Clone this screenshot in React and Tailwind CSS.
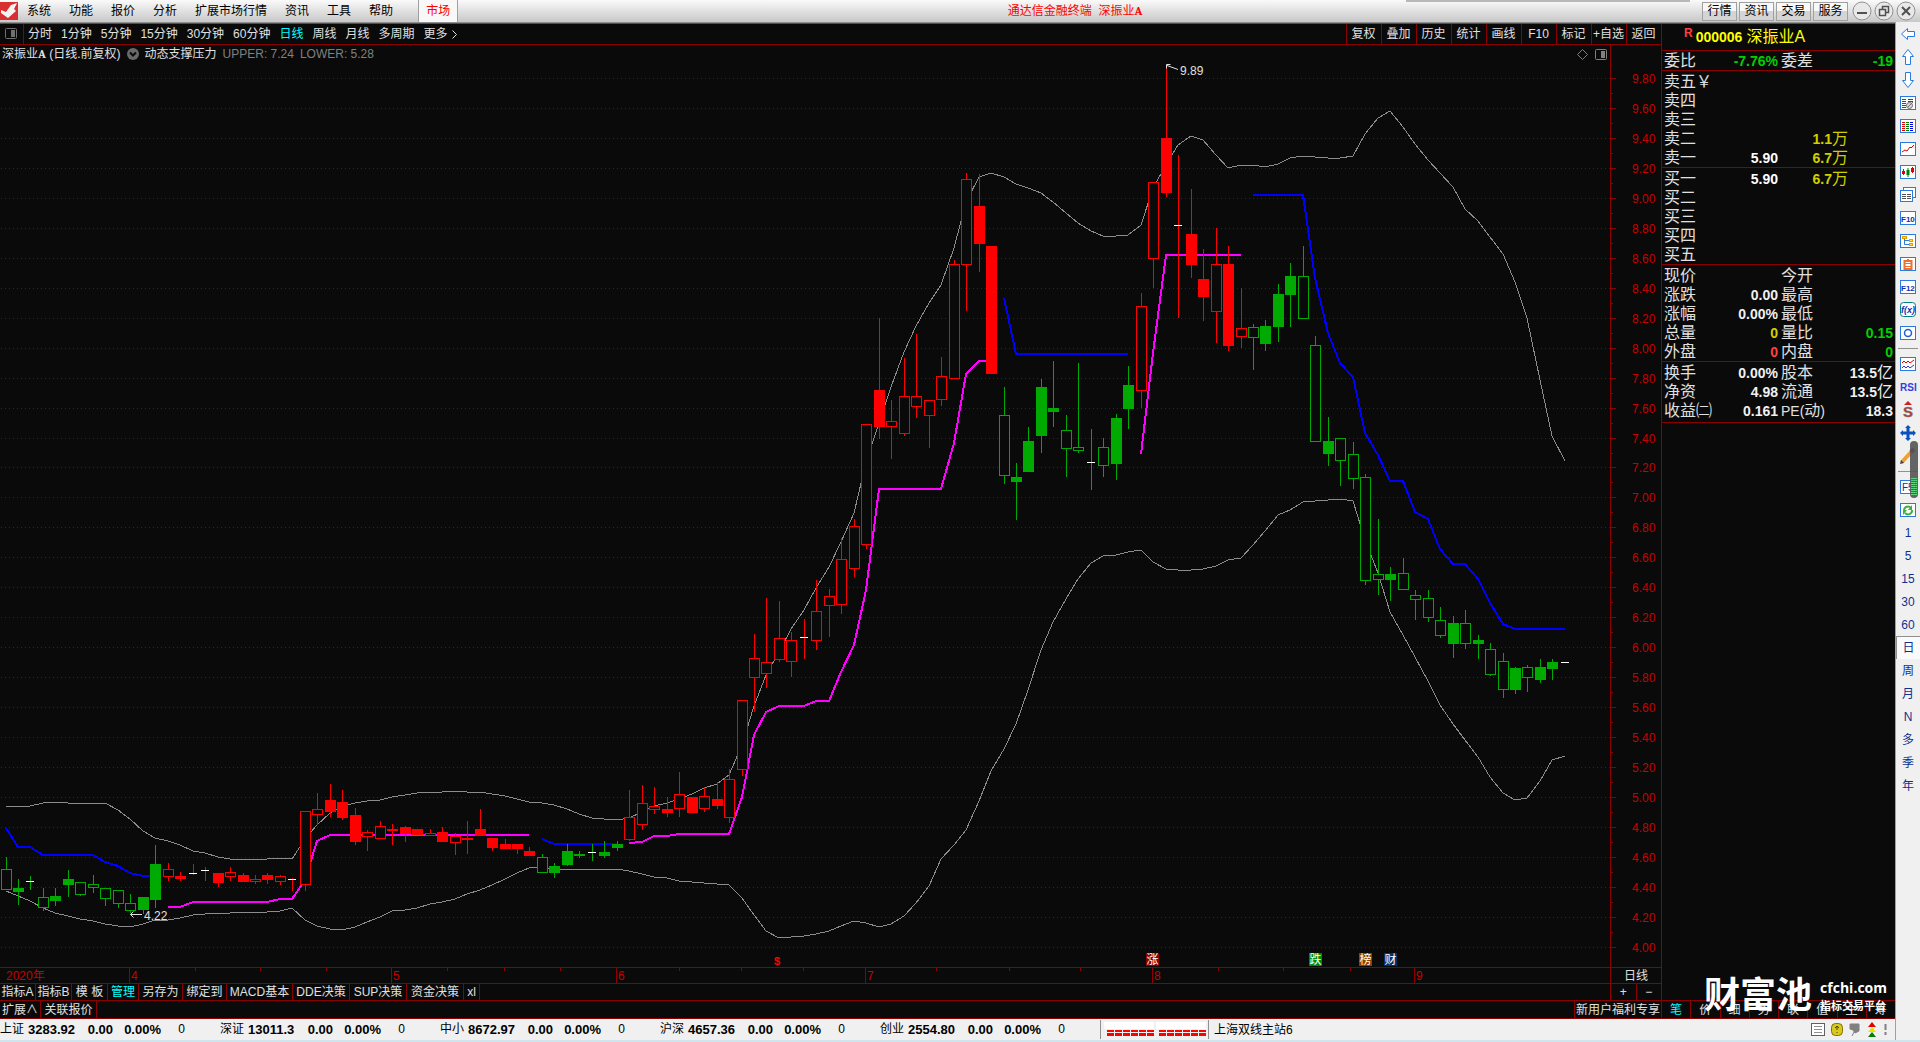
import { memo, useState } from 'react';
import clsx from 'clsx';

const MENUS = ['系统', '功能', '报价', '分析', '扩展市场行情', '资讯', '工具', '帮助'];
const HEADER_BUTTONS = ['行情', '资讯', '交易', '服务'];
const PERIODS = ['分时', '1分钟', '5分钟', '15分钟', '30分钟', '60分钟', '日线', '周线', '月线', '多周期'];
const CHART_ACTIONS = ['复权', '叠加', '历史', '统计', '画线', 'F10', '标记', '+自选', '返回'];

const INDICATOR_TABS = [
  { label: '指标A', width: 'w-[36px]' },
  { label: '指标B', width: 'w-[36px]' },
  { label: '模 板', width: 'w-[36px]' },
  { label: '管理', width: 'w-[31px]', active: true },
  { label: '另存为', width: 'w-[44px]' },
  { label: '绑定到', width: 'w-[44px]' },
  { label: 'MACD基本', width: 'w-[66px]' },
  { label: 'DDE决策', width: 'w-[57px]' },
  { label: 'SUP决策', width: 'w-[57px]' },
  { label: '资金决策', width: 'w-[57px]' },
  { label: 'xl', width: 'w-[16px]' },
];

const PANEL_TABS = ['笔', '价', '细', '势', '联', '值', '主', '筹'];

const INDEXES = [
  { name: '上证', value: '3283.92' },
  { name: '深证', value: '13011.3' },
  { name: '中小', value: '8672.97' },
  { name: '沪深', value: '4657.36' },
  { name: '创业', value: '2554.80' },
];

const SELLS = [
  { label: '卖五￥' }, { label: '卖四' }, { label: '卖三' },
  { label: '卖二', volume: '1.1' },
  { label: '卖一', price: '5.90', volume: '6.7' },
];
const BUYS = [
  { label: '买一', price: '5.90', volume: '6.7' },
  { label: '买二' }, { label: '买三' }, { label: '买四' }, { label: '买五' },
];

const WHITE = 'text-[#f0f0f0]';
const GREEN = 'text-[#00d000]';

const QUOTES = [
  ['现价', '', WHITE, '今开', '', WHITE],
  ['涨跌', '0.00', WHITE, '最高', '', WHITE],
  ['涨幅', '0.00%', WHITE, '最低', '', WHITE],
  ['总量', '0', 'text-[#d0d000]', '量比', '0.15', GREEN],
  ['外盘', '0', 'text-[#ff4040]', '内盘', '0', GREEN],
];
const FUNDAMENTALS = [
  ['换手', '0.00%', WHITE, '股本', '13.5亿', WHITE],
  ['净资', '4.98', WHITE, '流通', '13.5亿', WHITE],
  ['收益㈡', '0.161', WHITE, 'PE(动)', '18.3', WHITE],
];

// R/G hollow body, r/g solid body, x/y doji with a red/green wick
// [kind, high, body top, body bottom, low]
const CANDLES = [
  ['G', 857, 869, 889, 890], ['g', 879, 888, 892, 905], ['y', 876, 881, 881, 890], ['G', 888, 897, 907, 911],
  ['g', 888, 896, 901, 906], ['g', 870, 879, 885, 897], ['G', 882, 882, 894, 896], ['G', 875, 884, 887, 893],
  ['G', 888, 888, 898, 906], ['G', 890, 890, 903, 908], ['G', 894, 903, 910, 913], ['g', 897, 897, 910, 914],
  ['g', 845, 864, 900, 908], ['R', 863, 869, 876, 881], ['r', 872, 876, 879, 881], ['x', 864, 873, 873, 875],
  ['x', 867, 870, 870, 881], ['r', 873, 873, 883, 887], ['R', 867, 872, 876, 881], ['r', 873, 875, 882, 882],
  ['R', 875, 879, 881, 884], ['r', 873, 875, 880, 884], ['R', 875, 876, 881, 885], ['x', 878, 879, 879, 891],
  ['R', 811, 811, 884, 891], ['R', 793, 809, 814, 825], ['r', 784, 800, 812, 817], ['r', 790, 802, 818, 820],
  ['r', 808, 815, 842, 845], ['R', 830, 832, 836, 851], ['R', 821, 826, 838, 839], ['r', 824, 829, 831, 845],
  ['r', 826, 827, 834, 842], ['r', 829, 829, 835, 835], ['R', 829, 833, 835, 836], ['r', 827, 832, 842, 842],
  ['R', 833, 836, 842, 855], ['r', 821, 838, 840, 854], ['r', 809, 829, 836, 836], ['r', 838, 838, 848, 851],
  ['r', 839, 844, 849, 849], ['r', 844, 844, 849, 854], ['r', 847, 851, 856, 856], ['G', 854, 857, 872, 873],
  ['g', 863, 866, 873, 878], ['g', 844, 851, 865, 866], ['g', 851, 854, 856, 858], ['y', 844, 852, 852, 861],
  ['g', 841, 852, 856, 858], ['g', 841, 844, 848, 851], ['R', 790, 817, 839, 841], ['R', 785, 803, 824, 830],
  ['R', 787, 806, 809, 814], ['r', 797, 809, 813, 817], ['R', 772, 794, 808, 817], ['r', 797, 797, 813, 813],
  ['R', 787, 796, 808, 812], ['r', 782, 799, 806, 809], ['R', 769, 779, 817, 823], ['R', 700, 700, 769, 776],
  ['R', 634, 658, 677, 712], ['R', 598, 662, 673, 688], ['R', 601, 638, 659, 662], ['R', 632, 640, 661, 677],
  ['x', 619, 637, 637, 659], ['R', 580, 611, 640, 650], ['R', 589, 596, 605, 637], ['R', 538, 559, 604, 614],
  ['R', 519, 526, 568, 577], ['R', 424, 424, 544, 549], ['r', 318, 390, 427, 439], ['R', 400, 421, 426, 459],
  ['R', 358, 396, 433, 436], ['R', 334, 396, 406, 418], ['R', 400, 400, 415, 448], ['R', 357, 376, 399, 406],
  ['R', 260, 264, 378, 378], ['R', 173, 179, 264, 311], ['r', 174, 206, 244, 272], ['r', 246, 246, 374, 374],
  ['G', 387, 415, 475, 484], ['g', 463, 477, 482, 520], ['g', 427, 441, 472, 472], ['g', 379, 387, 436, 453],
  ['g', 361, 408, 412, 427], ['G', 415, 430, 448, 477], ['G', 363, 447, 450, 453], ['y', 429, 462, 462, 490],
  ['G', 438, 447, 465, 477], ['g', 414, 418, 464, 480], ['g', 366, 385, 409, 429], ['R', 293, 306, 390, 408],
  ['R', 182, 182, 258, 288], ['r', 66, 138, 193, 197], ['x', 155, 225, 225, 318], ['r', 189, 234, 265, 278],
  ['r', 249, 279, 297, 321], ['R', 228, 264, 311, 343], ['r', 246, 264, 346, 351], ['R', 288, 328, 336, 348],
  ['G', 324, 327, 337, 370], ['g', 320, 326, 344, 351], ['g', 284, 294, 327, 342], ['g', 263, 276, 295, 327],
  ['G', 246, 276, 318, 318], ['G', 336, 345, 441, 441], ['g', 417, 441, 454, 466], ['G', 438, 438, 460, 486],
  ['G', 442, 454, 478, 489], ['G', 474, 477, 580, 585], ['G', 519, 574, 579, 595], ['g', 567, 574, 580, 601],
  ['G', 558, 573, 589, 589], ['G', 590, 595, 599, 620], ['G', 590, 598, 617, 622], ['G', 607, 620, 635, 638],
  ['g', 616, 623, 644, 658], ['G', 610, 623, 643, 649], ['g', 635, 640, 644, 659], ['G', 643, 649, 674, 676],
  ['G', 653, 661, 689, 698], ['g', 667, 668, 690, 694], ['G', 665, 667, 677, 692], ['g', 659, 667, 680, 683],
  ['g', 659, 662, 669, 680], ['x', 662, 662, 662, 662],
];

const UPPER = [
  807, 806, 806, 803, 802, 803, 803, 803, 803, 810, 819, 831, 838, 841, 845, 851, 853, 857, 859, 860,
  859, 859, 858, 859, 839, 825, 813, 806, 803, 801, 800, 797, 795, 793, 792, 792, 791, 792, 792, 794,
  796, 799, 802, 803, 805, 809, 814, 818, 819, 820, 818, 812, 806, 803, 799, 794, 788, 784, 775, 745,
  706, 675, 652, 629, 610, 588, 567, 542, 513, 462, 423, 387, 352, 326, 303, 285, 248, 202, 177, 173,
  177, 184, 188, 193, 202, 213, 223, 231, 236, 236, 235, 225, 188, 165, 145, 136, 140, 155, 168, 165,
  165, 167, 164, 158, 156, 157, 158, 158, 156, 134, 118, 111, 127, 144, 160, 173, 187, 209, 221, 237,
  254, 282, 318, 380, 436, 461,
];

const LOWER = [
  891, 896, 901, 908, 913, 916, 919, 921, 924, 926, 927, 924, 920, 920, 918, 915, 914, 913, 913, 912,
  912, 912, 911, 908, 920, 926, 929, 930, 927, 922, 917, 911, 910, 908, 904, 902, 899, 894, 890, 885,
  879, 873, 868, 867, 869, 869, 869, 869, 869, 869, 871, 874, 877, 878, 881, 882, 883, 884, 885, 898,
  915, 931, 938, 937, 936, 934, 931, 926, 921, 923, 927, 924, 916, 903, 886, 859, 845, 830, 801, 771,
  749, 724, 690, 650, 622, 599, 579, 563, 556, 555, 552, 550, 562, 569, 570, 570, 569, 566, 560, 558,
  545, 531, 515, 510, 502, 501, 500, 499, 501, 540, 573, 612, 635, 657, 681, 705, 724, 740, 757, 777,
  793, 800, 798, 781, 760, 756,
];

// Support and resistance pieces: start bar, then one level per bar
const SUPPORTS = [
  { start: 13, ys: [907, 907, 902, 902, 902, 902, 902, 902, 902, 899, 899, 880, 841, 835, 835, 835, 835, 835, 835, 835, 835, 835, 835, 835, 835, 835, 835, 835, 835, 835] },
  { start: 50, ys: [843, 842, 836, 836, 834, 834, 834, 834, 834, 797, 735, 712, 706, 706, 706, 701, 701, 672, 645, 590, 489, 489, 489, 489, 489, 489, 443, 374, 361, 361] },
  { start: 91, ys: [454, 353, 255, 255, 255, 255, 255, 255, 255] },
];
const RESISTANCES = [
  { start: 0, ys: [828, 847, 847, 855, 855, 855, 855, 855, 862, 866, 873, 876, 876] },
  { start: 43, ys: [839, 844, 844, 844, 844, 844, 844] },
  { start: 80, ys: [298, 354, 354, 354, 354, 354, 354, 354, 354, 354, 354] },
  { start: 100, ys: [195, 195, 195, 195, 195, 278, 333, 363, 377, 433, 455, 481, 481, 512, 519, 549, 564, 564, 579, 603, 624, 629, 629, 629, 629, 629] },
];

const EVENTS = [
  { x: 1146, label: '涨', fill: '#8b0000' },
  { x: 1309, label: '跌', fill: '#008a00' },
  { x: 1359, label: '榜', fill: '#8a4000' },
  { x: 1384, label: '财', fill: '#003070' },
];

const MONTHS = [[129, '4'], [391, '5'], [616, '6'], [865, '7'], [1152, '8'], [1414, '9']];
const WEEKS = [195, 260, 326, 447, 504, 560, 679, 741, 803, 936, 1009, 1080, 1218, 1283, 1350];

const barX = i => Math.round(5.5 + i * 12.475);
const priceY = p => Math.round(78 + (9.8 - p) * 149.8);
const toPoints = (ys, start = 0) => ys.map((y, i) => `${barX(start + i)},${y}`).join(' ');
const PRICES = [...Array(30)].map((_, i) => 9.8 - i * 0.2);

const Candle = memo(({ index, candle }) => {
  const [kind, high, top, bottom, low] = candle;
  const x = barX(index);
  const color = 'Rrx'.includes(kind) ? '#ff0000' : '#00aa00';
  const doji = kind === 'x' || kind === 'y';
  const hollow = kind === 'R' || kind === 'G';
  return (
    <g>
      {low > high && <rect x={x} y={high} width="1" height={low - high} fill={color} />}
      {doji && <rect x={x - 4} y={top} width="8" height="1" fill="#ffffff" />}
      {hollow && <rect x={x - 4.5} y={top + 0.5} width="10" height={Math.max(bottom - top, 1)} fill="#0a0a0a" stroke={color} />}
      {!doji && !hollow && <rect x={x - 5} y={top} width="11" height={bottom - top} fill={color} />}
    </g>
  );
});

function Chart() {
  return (
    <div className="relative flex h-[922px]">
      <svg className="block h-full min-w-0 flex-1" fontSize="12">
        {/* bar levels are measured from the top of the window, the plot starts under the 45px of bars */}
        <g transform="translate(0 -45)">
          <g shapeRendering="crispEdges">
            {PRICES.map(p => (
              <line key={p} x1="1" x2="100%" y1={priceY(p) + 0.5} y2={priceY(p) + 0.5} stroke="#8b0000" strokeDasharray="1 3" />
            ))}
            <g fill="none" stroke="#8c8c8c">
              <polyline points={toPoints(UPPER)} />
              <polyline points={toPoints(LOWER)} />
            </g>
            <g fill="none" strokeWidth="2" stroke="#ff00ff">
              {SUPPORTS.map(s => <polyline key={s.start} points={toPoints(s.ys, s.start)} />)}
            </g>
            <g fill="none" strokeWidth="2" stroke="#0000ff">
              {RESISTANCES.map(s => <polyline key={s.start} points={toPoints(s.ys, s.start)} />)}
            </g>
            {CANDLES.map((c, i) => <Candle key={i} index={i} candle={c} />)}
          </g>

          <g stroke="#e0e0e0" fill="none">
            <path d="M142 914.5H130.500M133.500 911.500L130.500 914.500L133.500 917.500" />
            <path d="M1178 69.500L1167 65.500M1170.500 64.500H1166.500V68.500" />
          </g>
          <g fill="#e0e0e0">
            <text x="144" y="920">4.22</text>
            <text x="1180" y="75">9.89</text>
          </g>

          <text x="774" y="965" fontSize="11" fontWeight="bold" fill="#ff0000">$</text>
          {EVENTS.map(e => (
            <g key={e.label}>
              <rect x={e.x} y="953" width="13" height="13" fill={e.fill} />
              <text x={e.x + 0.5} y="964" fill="#ffffff">{e.label}</text>
            </g>
          ))}
        </g>
      </svg>

      <svg className="block h-full w-[51px] shrink-0" fontSize="12">
        <g transform="translate(0 -45)" shapeRendering="crispEdges" fill="#8b0000">
          <rect x="0" y="45" width="1" height="922" />
          {PRICES.map((p, i) => (
            <g key={p}>
              <rect x="0" y={priceY(p)} width="6" height="1" />
              {i < 29 && <rect x="0" y={priceY(p - 0.1)} width="3" height="1" />}
              <text x="22" y={priceY(p) + 5} fill="#c80000">{p.toFixed(2)}</text>
            </g>
          ))}
        </g>
      </svg>

      {/* Indicator legend over the plot */}
      <div className="absolute top-0 left-0 flex h-[18px] w-full items-center pl-[2px] text-[#e0e0e0]">
        <span>深振业<b className="font-serif">A</b> (日线.前复权)</span>
        <svg className="mx-[6px] h-3 w-3" viewBox="0 0 12 12">
          <circle cx="6" cy="6" r="6" fill="#6a6a6a" />
          <path d="M3 4.500L6 7.500L9 4.500" fill="none" stroke="#0a0a0a" strokeWidth="2" />
        </svg>
        <span>动态支撑压力</span>
        <span className="ml-[6px] text-[#808080]">UPPER: 7.24</span>
        <span className="ml-[6px] text-[#808080]">LOWER: 5.28</span>
        <svg className="mr-[54px] ml-auto h-3 w-[34px]" fill="none" stroke="#808080">
          <path d="M9.500 1.500L14.500 6.500L9.500 11.500L4.500 6.500Z" />
          <rect x="22.500" y="1.500" width="11" height="10" rx="1" />
          <rect x="28" y="3" width="4" height="7" fill="#808080" stroke="none" />
        </svg>
      </div>
    </div>
  );
}

function DateAxis() {
  return (
    <div className="flex h-4 border-t border-[#8b0000]">
      <svg className="block h-full min-w-0 flex-1" fontSize="12" fill="#c80000" shapeRendering="crispEdges">
        <text x="6" y="12">2020年</text>
        {MONTHS.map(([x, label]) => (
          <g key={label}>
            <rect x={x} y="0" width="1" height="16" fill="#8b0000" />
            <text x={x + 2} y="12">{label}</text>
          </g>
        ))}
        {WEEKS.map(x => <rect key={x} x={x} y="0" width="1" height="3" fill="#8b0000" />)}
      </svg>
      <div className="flex w-[51px] items-center justify-center border-l border-[#8b0000]">日线</div>
    </div>
  );
}

const DepthTable = ({ rows }) => (
  <div className="border-b border-[#8b0000] pt-px">
    <table className="w-full table-fixed text-base">
      <colgroup>
        <col className="w-[54px]" /><col className="w-[62px]" /><col className="w-[70px]" /><col />
      </colgroup>
      <tbody>
        {rows.map(r => (
          <tr key={r.label} className="h-[19px]">
            <th scope="row" className="p-0 pl-[2px] text-left font-normal leading-[18px] whitespace-nowrap">{r.label}</th>
            <td className="p-0 text-right text-sm font-bold leading-[18px] text-white">{r.price}</td>
            <td className="p-0 text-right leading-[18px] text-[#d0d000]">
              {r.volume && <><b className="text-sm leading-4">{r.volume}</b>万</>}
            </td>
            <td className="p-0" />
          </tr>
        ))}
      </tbody>
    </table>
  </div>
);

const QuoteTable = ({ rows, className }) => (
  <div className={className}>
    <table className="w-full table-fixed text-base">
      <colgroup>
        <col className="w-[54px]" /><col className="w-[62px]" /><col className="w-[58px]" /><col />
      </colgroup>
      <tbody>
        {rows.map(([a, av, aColor, b, bv, bColor]) => (
          <tr key={a} className="h-[19px]">
            <th scope="row" className="p-0 pl-[2px] text-left font-normal leading-[18px] whitespace-nowrap">{a}</th>
            <td className={clsx('p-0 text-right text-sm font-bold leading-[18px]', aColor)}>{av}</td>
            <th scope="row" className="p-0 pl-[3px] text-left font-normal leading-[18px] whitespace-nowrap">
              {b.startsWith('PE')
                ? <><span className="text-sm leading-4">PE(</span>动<span className="text-sm leading-4">)</span></>
                : b}
            </th>
            <td className={clsx('p-0 pr-[2px] text-right text-sm font-bold leading-[18px] whitespace-nowrap', bColor)}>
              {bv.replace('亿', '')}
              {bv.endsWith('亿') && <span className="text-base leading-4 font-normal">亿</span>}
            </td>
          </tr>
        ))}
      </tbody>
    </table>
  </div>
);

function QuotePanel() {
  return (
    <aside className="w-[234px] shrink-0 overflow-hidden border-l border-[#8b0000] text-[#e0e0e0]">
      <h2 className="flex h-[27px] items-center border-b border-[#8b0000] pl-[22px] text-base text-[#ffff00]">
        <span className="mb-2 text-xs font-bold text-[#ff4040]">R</span>
        <b className="ml-[3px] text-sm">000006</b>
        <span className="ml-1">深振业A</span>
      </h2>
      <QuoteTable rows={[['委比', '-7.76%', GREEN, '委差', '-19', GREEN]]} className="border-b border-[#8b0000]" />
      <DepthTable rows={SELLS} />
      <DepthTable rows={BUYS} />
      <QuoteTable rows={QUOTES} className="border-b border-[#8b0000] pt-px" />
      <QuoteTable rows={FUNDAMENTALS} className="border-b border-[#8b0000] pt-px pb-[2px]" />
    </aside>
  );
}

const Frame = ({ stroke = '#2a7ae0', children }) => (
  <>
    <rect x="1.500" y="2.500" width="15" height="13" fill="#ffffff" stroke={stroke} />
    {children}
  </>
);

const rowsOf = (x, w, color, ys = [5, 7, 9, 11, 13]) =>
  ys.map(y => <rect key={`${x}-${y}`} x={x} y={y} width={w} height="1" fill={color} />);

const TOOL_ICONS = [
  ['后退', <path d="M2.500 9L8.500 3.500V6.500H15.500V11.500H8.500V14.500Z" fill="#ffffff" stroke="#2a7ae0" />],
  ['上翻', <path d="M9 1.500L14.500 8.500H11.500V16.500H6.500V8.500H3.500Z" fill="#ffffff" stroke="#2a7ae0" />],
  ['下翻', <path d="M9 16.500L14.500 9.500H11.500V1.500H6.500V9.500H3.500Z" fill="#ffffff" stroke="#2a7ae0" />],
  ['定制版面', <Frame>{rowsOf(3, 4, '#008000')}{rowsOf(9, 5, '#e00000', [5, 7])}<circle cx="10.500" cy="11.500" r="3" fill="#d8d8d8" stroke="#707070" /><path d="M9 13L14 8" stroke="#707070" /></Frame>],
  ['行情报价', <Frame>{rowsOf(3, 3, '#e00000')}{rowsOf(7, 3, '#008000')}{rowsOf(11, 3, '#0000e0')}</Frame>],
  ['分时图', <Frame><path d="M3 12L6 10L8 11L11 7L12 8L15 5" fill="none" stroke="#e00000" /></Frame>],
  ['K线图', <Frame><path d="M4.500 6V12M13.500 4V10" stroke="#e00000" /><path d="M9 5V14" stroke="#008000" /><rect x="3" y="8" width="3" height="3" fill="#e00000" /><rect x="7.500" y="7" width="3" height="5" fill="#008000" /><rect x="12" y="5" width="3" height="4" fill="#e00000" /></Frame>],
  ['多股同列', <><rect x="4.500" y="1.500" width="12" height="10" fill="#ffffff" stroke="#2a7ae0" /><rect x="1.500" y="4.500" width="12" height="11" fill="#ffffff" stroke="#2a7ae0" />{rowsOf(3, 4, '#505050', [8, 10, 12])}{rowsOf(8, 4, '#505050', [8, 10, 12])}</>],
  ['F10资料', <Frame><text x="2" y="12.500" fontSize="8" fontWeight="bold" fill="#1030b0">F10</text></Frame>],
  ['板块树', <Frame><path d="M5.500 6V12.500H10M5.500 8.500H10" fill="none" stroke="#2a7ae0" /><rect x="3.500" y="4.500" width="4" height="2" fill="#ffe040" stroke="#e0a000" /><rect x="10.500" y="7.500" width="3" height="2" fill="#ffe040" stroke="#e0a000" /><rect x="10.500" y="11.500" width="3" height="2" fill="#ffe040" stroke="#e0a000" /></Frame>],
  ['自选股', <Frame><path d="M5.500 6H12.500V14H5.500ZM9 4V6" fill="none" stroke="#f07030" strokeWidth="2" /><path d="M6 8.500H12M6 11.500H12" stroke="#f07030" /></Frame>],
  ['F12交易', <Frame><text x="2" y="12.500" fontSize="8" fontWeight="bold" fill="#1030b0">F12</text></Frame>],
  ['公式', <><rect x="1.500" y="1.500" width="15" height="14" rx="3" fill="#ffffff" stroke="#008080" /><text x="2" y="12" fontSize="9" fontStyle="italic" fontWeight="bold" fill="#1030b0">f(x)</text></>],
  ['选股', <Frame><circle cx="9" cy="9" r="3.500" fill="none" stroke="#2060d0" strokeWidth="1.500" /></Frame>],
  null,
  ['指标叠加', <Frame><path d="M3 8L5 6L7 8L9 6L11 8L15 5" fill="none" stroke="#e00000" /><path d="M3 13L5 11L7 13L9 11L11 13L15 10" fill="none" stroke="#3030d0" /></Frame>],
  ['RSI指标', <text x="1" y="13" fontSize="10" fontWeight="bold" fill="#3040e0">RSI</text>],
  ['资金', <><path d="M9 0L13 4H5Z" fill="#d02020" /><text x="4" y="16" fontSize="15" fontWeight="bold" fill="#c03030" stroke="#808080" strokeWidth="0.500">S</text></>],
  ['移动', <path d="M9 1L12 4H10.500V7.500H14V6L17 9L14 12V10.500H10.500V14H12L9 17L6 14H7.500V10.500H4V12L1 9L4 6V7.500H7.500V4H6Z" fill="#0a50c0" />],
  ['画线工具', <><path d="M3 15L13 4" stroke="#f0a030" strokeWidth="4" /><path d="M12 5L15 2" stroke="#703030" strokeWidth="4" /><path d="M1 17L2 13L5 16Z" fill="#404040" /></>],
  null,
  ['F5切换', <Frame><text x="3" y="13" fontSize="10" fill="#1030b0">F5</text></Frame>],
  ['刷新', <Frame><path d="M5 9A4 4 0 0 1 12 7M13 9A4 4 0 0 1 6 12" fill="none" stroke="#40b040" strokeWidth="2" /><path d="M13 4V9H9ZM4 14V9H8Z" fill="#40b040" /></Frame>],
];

const TOOL_PERIODS = ['1', '5', '15', '30', '60', '日', '周', '月', 'N', '多', '季', '年'];

function ToolStrip() {
  return (
    <nav className="relative -mt-px flex w-[25px] shrink-0 flex-col border-l border-[#a0a0a0] bg-[#f0f0f0] text-[#103090]">
      {TOOL_ICONS.map((tool, i) => (tool ? (
        <button key={tool[0]} aria-label={tool[0]} className="flex h-[23px] items-center justify-center">
          <svg className="h-[18px] w-[18px]" viewBox="0 0 18 18">{tool[1]}</svg>
        </button>
      ) : (
        <div key={i} className="flex h-2 items-center px-[2px]"><div className="h-px w-full bg-[#909090]" /></div>
      )))}
      {TOOL_PERIODS.map(p => (
        <button
          key={p}
          className={clsx(
            'flex h-[23px] items-center justify-center',
            p === '日' && 'border-t border-l border-[#909090] bg-[#fafafa]'
          )}
        >
          {p}
        </button>
      ))}
      {/* Volume gauge floating over the strip */}
      <div className="absolute top-[419px] right-[2px] flex h-[57px] w-2 flex-col justify-end gap-px rounded-full bg-[#555555] px-px pb-[3px] opacity-90">
        {[...Array(9)].map((_, i) => <div key={i} className="h-px bg-[#50d070]" />)}
      </div>
    </nav>
  );
}

function TitleBar() {
  return (
    <header className="relative flex h-[23px] items-center border-b border-[#909090] bg-linear-to-b from-[#fafafa] to-[#c8c8c8] text-black">
      <svg className="h-[18px] w-[18px]" viewBox="0 0 18 18">
        <rect width="18" height="18" fill="#d83030" />
        <path d="M1 8L6 10L11 3L17 1L14 7L16 9L8 16L1 11Z" fill="#f4f4f4" />
      </svg>
      <nav className="flex">
        {MENUS.map(m => <button key={m} className="px-[9px]">{m}</button>)}
      </nav>
      <button className="ml-4 h-full border-x border-[#a0a0a0] bg-[#f8f8f8] px-[7px] text-[#ff0000]">市场</button>
      <h1 className="min-w-0 flex-1 pr-[10px] text-center text-[#ff0000]">通达信金融终端&nbsp; 深振业<b className="font-serif">A</b></h1>
      <div className="flex gap-[2px]">
        {HEADER_BUTTONS.map(b => (
          <button key={b} className="h-[19px] w-[35px] border border-[#a0a0a0] bg-linear-to-b from-[#f8f8f8] from-50% to-[#d4d4d4] to-50%">{b}</button>
        ))}
      </div>
      <div className="mx-1 flex gap-[2px]">
        {[
          ['最小化', <path d="M5 12H15" />],
          ['还原', <path d="M8.500 8V5.500H14.500V11.500H12M5.500 8.500H11.500V14.500H5.500Z" strokeWidth="1.500" />],
          ['关闭', <path d="M6 6L14 14M14 6L6 14" />],
        ].map(([label, shape]) => (
          <button key={label} aria-label={label}>
            <svg className="h-5 w-5" viewBox="0 0 20 20" fill="none" stroke="#505050" strokeWidth="2">
              <circle cx="10" cy="10" r="9" fill="#e8e8e8" stroke="#909090" strokeWidth="1" />
              {shape}
            </svg>
          </button>
        ))}
      </div>
      <div className="absolute top-0 right-[230px] h-[2px] w-[284px] bg-[#b8b8b8]" />
    </header>
  );
}

function PeriodBar({ period, onChange }) {
  return (
    <div className="flex h-[21px] border-b border-[#8b0000]">
      <button aria-label="侧栏" className="flex w-6 items-center border-r border-[#8b0000] pl-[5px]">
        <svg className="h-3 w-3" fill="none" stroke="#707070">
          <rect x="0.500" y="0.500" width="11" height="10" rx="1" />
          <rect x="6" y="2" width="4" height="7" fill="#707070" stroke="none" />
        </svg>
      </button>
      <nav className="flex flex-1 gap-[9px] pl-1">
        {PERIODS.map(p => (
          <button key={p} onClick={() => onChange(p)} className={clsx(p === period && 'text-[#00ffff]')}>{p}</button>
        ))}
        <button className="flex items-center gap-1">
          更多
          <svg className="h-[9px] w-[5px]" fill="none" stroke="#e0e0e0"><path d="M0.500 0.500L4.500 4.500L0.500 8.500" /></svg>
        </button>
      </nav>
      {CHART_ACTIONS.map(a => (
        <button key={a} className="w-[35px] border-l border-[#8b0000] pr-px whitespace-nowrap">{a}</button>
      ))}
    </div>
  );
}

function StatusBar() {
  return (
    <footer className="flex h-[21px] items-center bg-[#f0f0f0] text-black">
      {INDEXES.map(item => (
        <div key={item.name} className="flex w-[220px] items-center">
          <span className="w-[28px]">{item.name}</span>
          <b className="w-[48px] text-[13px]">{item.value}</b>
          <b className="w-[37px] text-right text-[13px]">0.00</b>
          <b className="w-[48px] text-right text-[13px]">0.00%</b>
          <span className="w-[24px] text-right">0</span>
        </div>
      ))}
      <div className="flex h-[19px] w-[109px] items-center justify-center border-x border-[#909090]">
        <svg className="h-[15px] w-[102px]" shapeRendering="crispEdges">
          <rect x="0" y="0" width="50" height="7" fill="#ffffff" />
          <rect x="52" y="0" width="50" height="7" fill="#ffffff" />
          {[...Array(12)].map((_, i) => (
            <g key={i} fill="#ff0000">
              <rect x={i * 8 + (i > 5 ? 7 : 3)} y="8" width="7" height="2" />
              <rect x={i * 8 + (i > 5 ? 7 : 3)} y="11" width="7" height="3" />
            </g>
          ))}
        </svg>
      </div>
      <span className="ml-[5px] flex-1">上海双线主站6</span>
      <svg className="mr-[6px] h-[15px] w-[78px]">
        <rect x="0.500" y="1.500" width="13" height="12" fill="#ffffff" stroke="#606060" />
        <path d="M3 4.500H11M3 7.500H11M3 10.500H11" stroke="#909090" />
        <rect x="20.500" y="1.500" width="11" height="12" rx="4" fill="#d8c820" stroke="#807000" />
        <path d="M26 4V8M24 6L26 4L28 6M26 10V11" fill="none" stroke="#504000" />
        <path d="M39 2H48V9L44 11L42 8L39 7ZM41 14L43 10" fill="#808080" stroke="#808080" />
        <path d="M61 0L65 5H57Z" fill="#e00000" />
        <path d="M61 5L65 10H57Z" fill="#f0e000" />
        <path d="M61 10L65 15H57Z" fill="#008000" />
        <path d="M74.500 2V8M74.500 10V13" stroke="#808080" strokeWidth="2" />
      </svg>
    </footer>
  );
}

export default function App() {
  const [period, setPeriod] = useState('日线');

  return (
    <div className="flex min-h-screen flex-col bg-[#0a0a0a] font-['Liberation_Sans','Noto_Sans_CJK_SC',sans-serif] text-xs text-[#e0e0e0]">
      <TitleBar />
      <div className="flex flex-1">
        <div className="flex min-w-0 flex-1 flex-col border-t border-[#505050]">
          <div className="flex flex-1">
            <main className="min-w-0 flex-1">
              <PeriodBar period={period} onChange={setPeriod} />
              <Chart />
              <DateAxis />
              <div className="flex h-[17px] border-t border-[#8b0000]">
                {INDICATOR_TABS.map(t => (
                  <button
                    key={t.label}
                    className={clsx('border-r border-[#8b0000] leading-4 whitespace-nowrap', t.width, t.active && 'text-[#00ffff]')}
                  >
                    {t.label}
                  </button>
                ))}
                <div className="ml-auto flex w-[51px] border-l border-[#8b0000]">
                  <button className="flex-1 border-r border-[#8b0000] leading-4">+</button>
                  <button className="flex-1 leading-4">−</button>
                </div>
              </div>
            </main>
            <QuotePanel />
          </div>

          <div className="relative flex h-[19px] border-y border-[#8b0000]">
            <button className="w-[41px] border-r border-[#8b0000] leading-4">扩展∧</button>
            <button className="w-[56px] border-r border-[#8b0000] leading-4">关联报价</button>
            <button className="ml-auto w-[87px] border-l border-[#8b0000] leading-4">新用户福利专享</button>
            <div className="flex w-[234px]">
              {PANEL_TABS.map((t, i) => (
                <button key={t} className={clsx('flex-1 border-l border-[#8b0000] leading-4', i === 0 && 'text-[#00ffff]')}>{t}</button>
              ))}
            </div>
            {/* Brand mark */}
            <div className="absolute right-2 bottom-[2px] flex items-center gap-2 text-white">
              <span className="text-[36px] leading-10 font-bold">财富池</span>
              <span className="flex flex-col">
                <span className="font-['Open_Sans'] text-sm leading-5 font-bold">cfchi.com</span>
                <span className="text-[11px] leading-4 font-bold">指标交易平台</span>
              </span>
            </div>
          </div>
          <StatusBar />
        </div>
        <ToolStrip />
      </div>
      <div className="h-[2px] bg-[#d0e4ee]" />
    </div>
  );
}
